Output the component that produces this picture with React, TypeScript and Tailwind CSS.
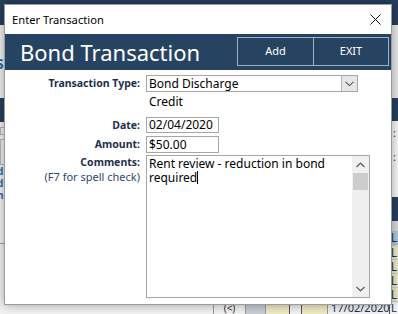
import React from "react";

const font = { fontFamily: '"Noto Sans", "Open Sans", sans-serif' };

function Background() {
  return (
    <div className="flex w-[398px] h-[314px]">
      <div className="flex flex-col w-[199px]">
        <div className="h-[25px] bg-[#253f5c]" />
        <div className="h-[73px] bg-[#efefef] flex items-center">
          <span className="text-[#2c6aa8] text-[18px] leading-none font-semibold -ml-[5px]">s</span>
        </div>
        <div className="h-[24px] bg-[#253f5c]" />
        <div className="flex-1 bg-[#f2f2f2] flex flex-col pt-[5px]">
          <div className="h-[8px] border border-[#b5b5b5]" />
          <div className="h-[26px] border border-[#b5b5b5] mt-[4px]" />
          <div className="text-[#2c6aa8] text-[10px] leading-[12px] font-bold -ml-[3px]">d</div>
          <div className="text-[#2c6aa8] text-[10px] leading-[12px] font-bold -ml-[3px]">d</div>
          <div className="text-[#2c6aa8] text-[10px] leading-[12px] font-bold -ml-[3px]">n</div>
          <div className="mt-[42px] h-px bg-[#9a9a9a]" />
        </div>
      </div>
      <div className="flex flex-col w-[199px]">
        <div className="h-[25px] bg-[#253f5c]" />
        <div className="h-[73px] bg-gradient-to-r from-[#e2e2e2] via-[#d6d6d6] to-[#e8e8e8]" />
        <div className="h-[24px] bg-[#253f5c]" />
        <div className="h-[76px] bg-[#f7f7f7] flex flex-col items-end pr-[2px] text-[11px] leading-[24px] text-[#333]">
          <span>:</span>
          <span>:</span>
        </div>
        <div className="h-[24px] bg-[#253f5c]" />
        <div className="h-[10px] bg-[#d9d9d9]" />
        <div className="flex-1 flex flex-col">
          <div className="h-[14px] bg-[#a9c8da] flex justify-end pr-[1px] text-[12px] leading-[14px] text-[#1b3556]">L</div>
          <div className="h-[14px] bg-[#eeeac3] border-t border-[#d0d0d0] flex justify-end pr-[1px] text-[12px] leading-[13px] text-[#1b3556]">L</div>
          <div className="h-[14px] bg-[#eeeac3] border-t border-[#d0d0d0] flex justify-end pr-[1px] text-[12px] leading-[13px] text-[#1b3556]">L</div>
          <div className="h-[14px] bg-[#eeeac3] border-t border-[#d0d0d0] flex justify-end pr-[1px] text-[12px] leading-[13px] text-[#1b3556]">L</div>
          <div className="h-[14px] bg-[#eeeac3] border-t border-[#d0d0d0] flex justify-end pr-[1px] text-[12px] leading-[13px] text-[#1b3556]">L</div>
          <div className="flex-1 flex bg-[#f2f2f2] border-t border-[#c0c0c0] text-[11px] leading-[12px] text-[#333]">
            <div className="w-[14px]" />
            <div className="w-[32px] border-l border-[#9a9a9a] text-center text-[10px]">(&lt;)</div>
            <div className="w-[20px] bg-[#c9cdd4] border-l border-[#9a9a9a]" />
            <div className="w-[24px] bg-[#eeeac3] border-l border-[#9a9a9a]" />
            <div className="w-[12px] border-l border-[#555]" />
            <div className="w-[26px] bg-[#eeeac3] border-l border-[#555]" />
            <div className="w-[62px] border-l border-[#9a9a9a] pl-[3px] text-[#1b3556] whitespace-nowrap overflow-hidden">17/02/2020</div>
            <div className="flex-1 border-l border-[#555] pl-[1px] text-[#1b3556]">L</div>
          </div>
        </div>
      </div>
    </div>
  );
}

function Dialog() {
  return (
    <div
      className="absolute left-[4px] top-[4px] w-[388px] h-[301px] bg-white border border-[#9c9c9c] shadow-[0_0_10px_rgba(0,0,0,0.35)] flex flex-col"
      style={font}
    >
      <div className="h-[29px] flex items-center justify-between pl-[7px] pr-[9px]">
        <span className="text-[11.2px] text-black leading-none">Enter Transaction</span>
        <svg width="11" height="11" viewBox="0 0 11 11" className="mr-[1px]">
          <path d="M0.5 0.5 L10.5 10.5 M10.5 0.5 L0.5 10.5" stroke="#111" strokeWidth="1" />
        </svg>
      </div>
      <div className="h-[36px] bg-[#264462] flex items-center justify-between pl-[15px] pr-[2px]">
        <span className="text-white text-[22px] leading-none mt-[-1px]">Bond Transaction</span>
        <div className="flex h-[29px] border border-[#9eb0c3] mt-[-1px]">
          <div className="w-[76px] flex items-center justify-center text-white text-[11px] border-r border-[#9eb0c3]">Add</div>
          <div className="w-[74px] flex items-center justify-center text-white text-[11px]">EXIT</div>
        </div>
      </div>
      <div className="flex flex-col pt-[5px]">
        <div className="flex items-center h-[17px]">
          <div className="w-[135px] text-right text-[10.5px] font-bold text-[#1e2f4c] leading-none">Transaction Type:</div>
          <div className="ml-[6px] w-[212px] h-[17px] border border-[#a7a7a7] flex items-stretch">
            <div className="flex-1 text-[12px] leading-[15px] pl-[2px] text-black">Bond Discharge</div>
            <div className="w-[16px] bg-[#e6e6e6] border-l border-[#b8b8b8] flex items-center justify-center">
              <svg width="9" height="6" viewBox="0 0 9 6">
                <path d="M0.5 0.8 L4.5 4.6 L8.5 0.8" stroke="#555" strokeWidth="1.1" fill="none" />
              </svg>
            </div>
          </div>
        </div>
        <div className="pl-[144px] h-[18px] text-[12px] leading-[18px] text-black mt-[1px]">Credit</div>
        <div className="flex items-center h-[16px] mt-[6px]">
          <div className="w-[135px] text-right text-[10.5px] font-bold text-[#1e2f4c] leading-none">Date:</div>
          <div className="ml-[6px] w-[73px] h-[16px] border border-[#a7a7a7] text-[12px] leading-[14px] pl-[2px] text-black">02/04/2020</div>
        </div>
        <div className="flex items-center h-[17px] mt-[3px]">
          <div className="w-[135px] text-right text-[10.5px] font-bold text-[#1e2f4c] leading-none">Amount:</div>
          <div className="ml-[6px] w-[73px] h-[17px] border border-[#a7a7a7] text-[12px] leading-[15px] pl-[2px] text-black">$50.00</div>
        </div>
        <div className="flex mt-[2px]">
          <div className="w-[135px] flex flex-col items-end pt-[1px]">
            <div className="text-[10.5px] font-bold text-[#1e2f4c] leading-[13px]">Comments:</div>
            <div className="text-[11px] text-[#2e4a6e] leading-[14px] mt-[1px]">(F7 for spell check)</div>
          </div>
          <div className="ml-[6px] w-[224px] h-[143px] border border-[#a7a7a7] flex">
            <div className="flex-1 text-[12px] leading-[14px] pl-[2px] pt-[1px] text-black">
              Rent review - reduction in bond required
              <span className="inline-block w-px h-[13px] bg-black align-[-2px]" />
            </div>
            <div className="w-[17px] bg-[#f0f0f0] flex flex-col items-center">
              <div className="h-[17px] flex items-center justify-center">
                <svg width="9" height="6" viewBox="0 0 9 6">
                  <path d="M0.5 5 L4.5 1.2 L8.5 5" stroke="#606060" strokeWidth="1.2" fill="none" />
                </svg>
              </div>
              <div className="w-[15px] h-[17px] bg-[#cdcdcd]" />
              <div className="flex-1" />
              <div className="h-[17px] flex items-center justify-center">
                <svg width="9" height="6" viewBox="0 0 9 6">
                  <path d="M0.5 1 L4.5 4.8 L8.5 1" stroke="#606060" strokeWidth="1.2" fill="none" />
                </svg>
              </div>
            </div>
          </div>
        </div>
      </div>
    </div>
  );
}

export default function App() {
  return (
    <div className="relative w-[398px] h-[314px] overflow-hidden bg-[#f0f0f0]" style={font}>
      <Background />
      <Dialog />
    </div>
  );
}
